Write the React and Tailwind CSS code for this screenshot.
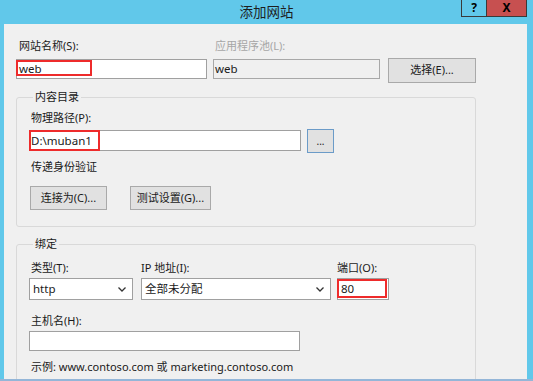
const Chevron = () => (
  <svg width="8" height="5" viewBox="0 0 8 5" className="shrink-0">
    <polyline points="0.5,0.5 4,4 7.5,0.5" fill="none" stroke="#333" strokeWidth="1.3" />
  </svg>
);

const Btn = ({ children, className = '' }) => (
  <div className={`flex items-center justify-center bg-[#e1e1e1] border border-[#a9a9a9] ${className}`}>
    {children}
  </div>
);

const Legend = ({ children }) => (
  <legend className="ml-[4px] px-[2px] leading-[14px]">{children}</legend>
);

export default function App() {
  return (
    <div className="w-[533px] h-[381px] overflow-hidden bg-[#61c8ea] flex flex-col font-['Noto_Sans','Noto_Sans_CJK_SC',sans-serif] text-[11px] text-[#1a1a1a]">
      {/* title bar */}
      <div className="h-[24px] shrink-0 flex">
        <div className="w-[72px]" />
        <div className="flex-1 text-center text-[13.5px] leading-[24px] text-[#1e1e1e]">添加网站</div>
        <div className="w-[66px] h-[17px] flex">
          <div className="w-[25px] h-full border-l border-b border-[#3a3a3a] flex items-center justify-center font-bold text-[12px] leading-none text-black">?</div>
          <div className="w-[41px] h-full bg-[#c75050] border-l border-r border-b border-[#3a3a3a] flex items-center justify-center font-bold text-[12px] leading-none text-black">X</div>
        </div>
        <div className="w-[6px]" />
      </div>

      {/* client area */}
      <div className="ml-[4px] mr-[6px] h-[355px] shrink-0 bg-[#f0f0f0] pl-[12px] pt-[14px]">
        <div className="flex">
          <div className="w-[191px]">
            <div className="leading-[16px] pl-[3px]">网站名称(S):</div>
            <div className="relative mt-[5px] h-[20px] border border-[#a0a0a0] bg-white pl-[2px] leading-[18px] text-[11.5px]">
              web
              <div className="absolute -left-px top-0 w-[76px] h-[16px] border-2 border-[#ee2b2b]" />
            </div>
          </div>
          <div className="ml-[6px] w-[167px]">
            <div className="leading-[16px] pl-[2px] text-[#a6a6a6]">应用程序池(L):</div>
            <div className="mt-[5px] h-[20px] border border-[#a8a8a8] bg-[#f0f0f0] pl-[1px] leading-[18px] text-[11.5px]">web</div>
          </div>
          <div className="ml-[8px] pt-[20px]">
            <Btn className="w-[88px] h-[25px]">选择(E)...</Btn>
          </div>
        </div>

        <fieldset className="mt-[7px] w-[460px] border border-[#d9d9d9] rounded-[3px] pl-[12px] pb-[16px]">
          <Legend>内容目录</Legend>
          <div className="mt-[6px] leading-[16px] pl-[2px]">物理路径(P):</div>
          <div className="mt-[4px] flex items-start">
            <div className="relative w-[272px] h-[21px] border border-[#a0a0a0] bg-white pl-[1px] leading-[19px] text-[11.5px]">
              D:\muban1
              <div className="absolute -left-px -top-px w-[71px] h-[21px] border-2 border-[#ee2b2b]" />
            </div>
            <Btn className="ml-[6px] -mt-px w-[27px] h-[24px] !border-[#6b9bc8] text-[10px] leading-none">...</Btn>
          </div>
          <div className="mt-[6px] leading-[16px] pl-[2px]">传递身份验证</div>
          <div className="mt-[11px] flex">
            <Btn className="ml-[1px] w-[77px] h-[24px]">连接为(C)...</Btn>
            <Btn className="ml-[23px] w-[81px] h-[24px]">测试设置(G)...</Btn>
          </div>
        </fieldset>

        <fieldset className="mt-[10px] w-[460px] h-[200px] border border-[#d9d9d9] rounded-[3px] pl-[12px]">
          <Legend>绑定</Legend>
          <div className="mt-[9px] flex">
            <div className="w-[104px]">
              <div className="leading-[16px] pl-[2px]">类型(T):</div>
              <div className="mt-[2px] h-[22px] border border-[#a0a0a0] bg-white flex items-center justify-between pl-[3px] pr-[6px] text-[11.5px]">
                <span>http</span>
                <Chevron />
              </div>
            </div>
            <div className="ml-[8px] w-[190px]">
              <div className="leading-[16px]">IP 地址(I):</div>
              <div className="mt-[2px] h-[22px] border border-[#a0a0a0] bg-white flex items-center justify-between pl-[3px] pr-[6px] text-[11.5px]">
                <span>全部未分配</span>
                <Chevron />
              </div>
            </div>
            <div className="ml-[6px] w-[52px]">
              <div className="leading-[16px]">端口(O):</div>
              <div className="relative mt-[2px] h-[22px] border border-[#a0a0a0] bg-white flex items-center pl-[3px] text-[11.5px]">
                80
                <div className="absolute -left-px top-0 w-[50px] h-[19px] border-2 border-[#ee2b2b]" />
              </div>
            </div>
          </div>
          <div className="mt-[13px] leading-[16px] pl-[2px]">主机名(H):</div>
          <div className="mt-[2px] w-[271px] h-[20px] border border-[#a0a0a0] bg-white" />
          <div className="mt-[8px] leading-[16px] pl-[2px]">示例: www.contoso.com 或 marketing.contoso.com</div>
        </fieldset>
      </div>
      <div className="flex-1 bg-[#94b6d8]" />
    </div>
  );
}
